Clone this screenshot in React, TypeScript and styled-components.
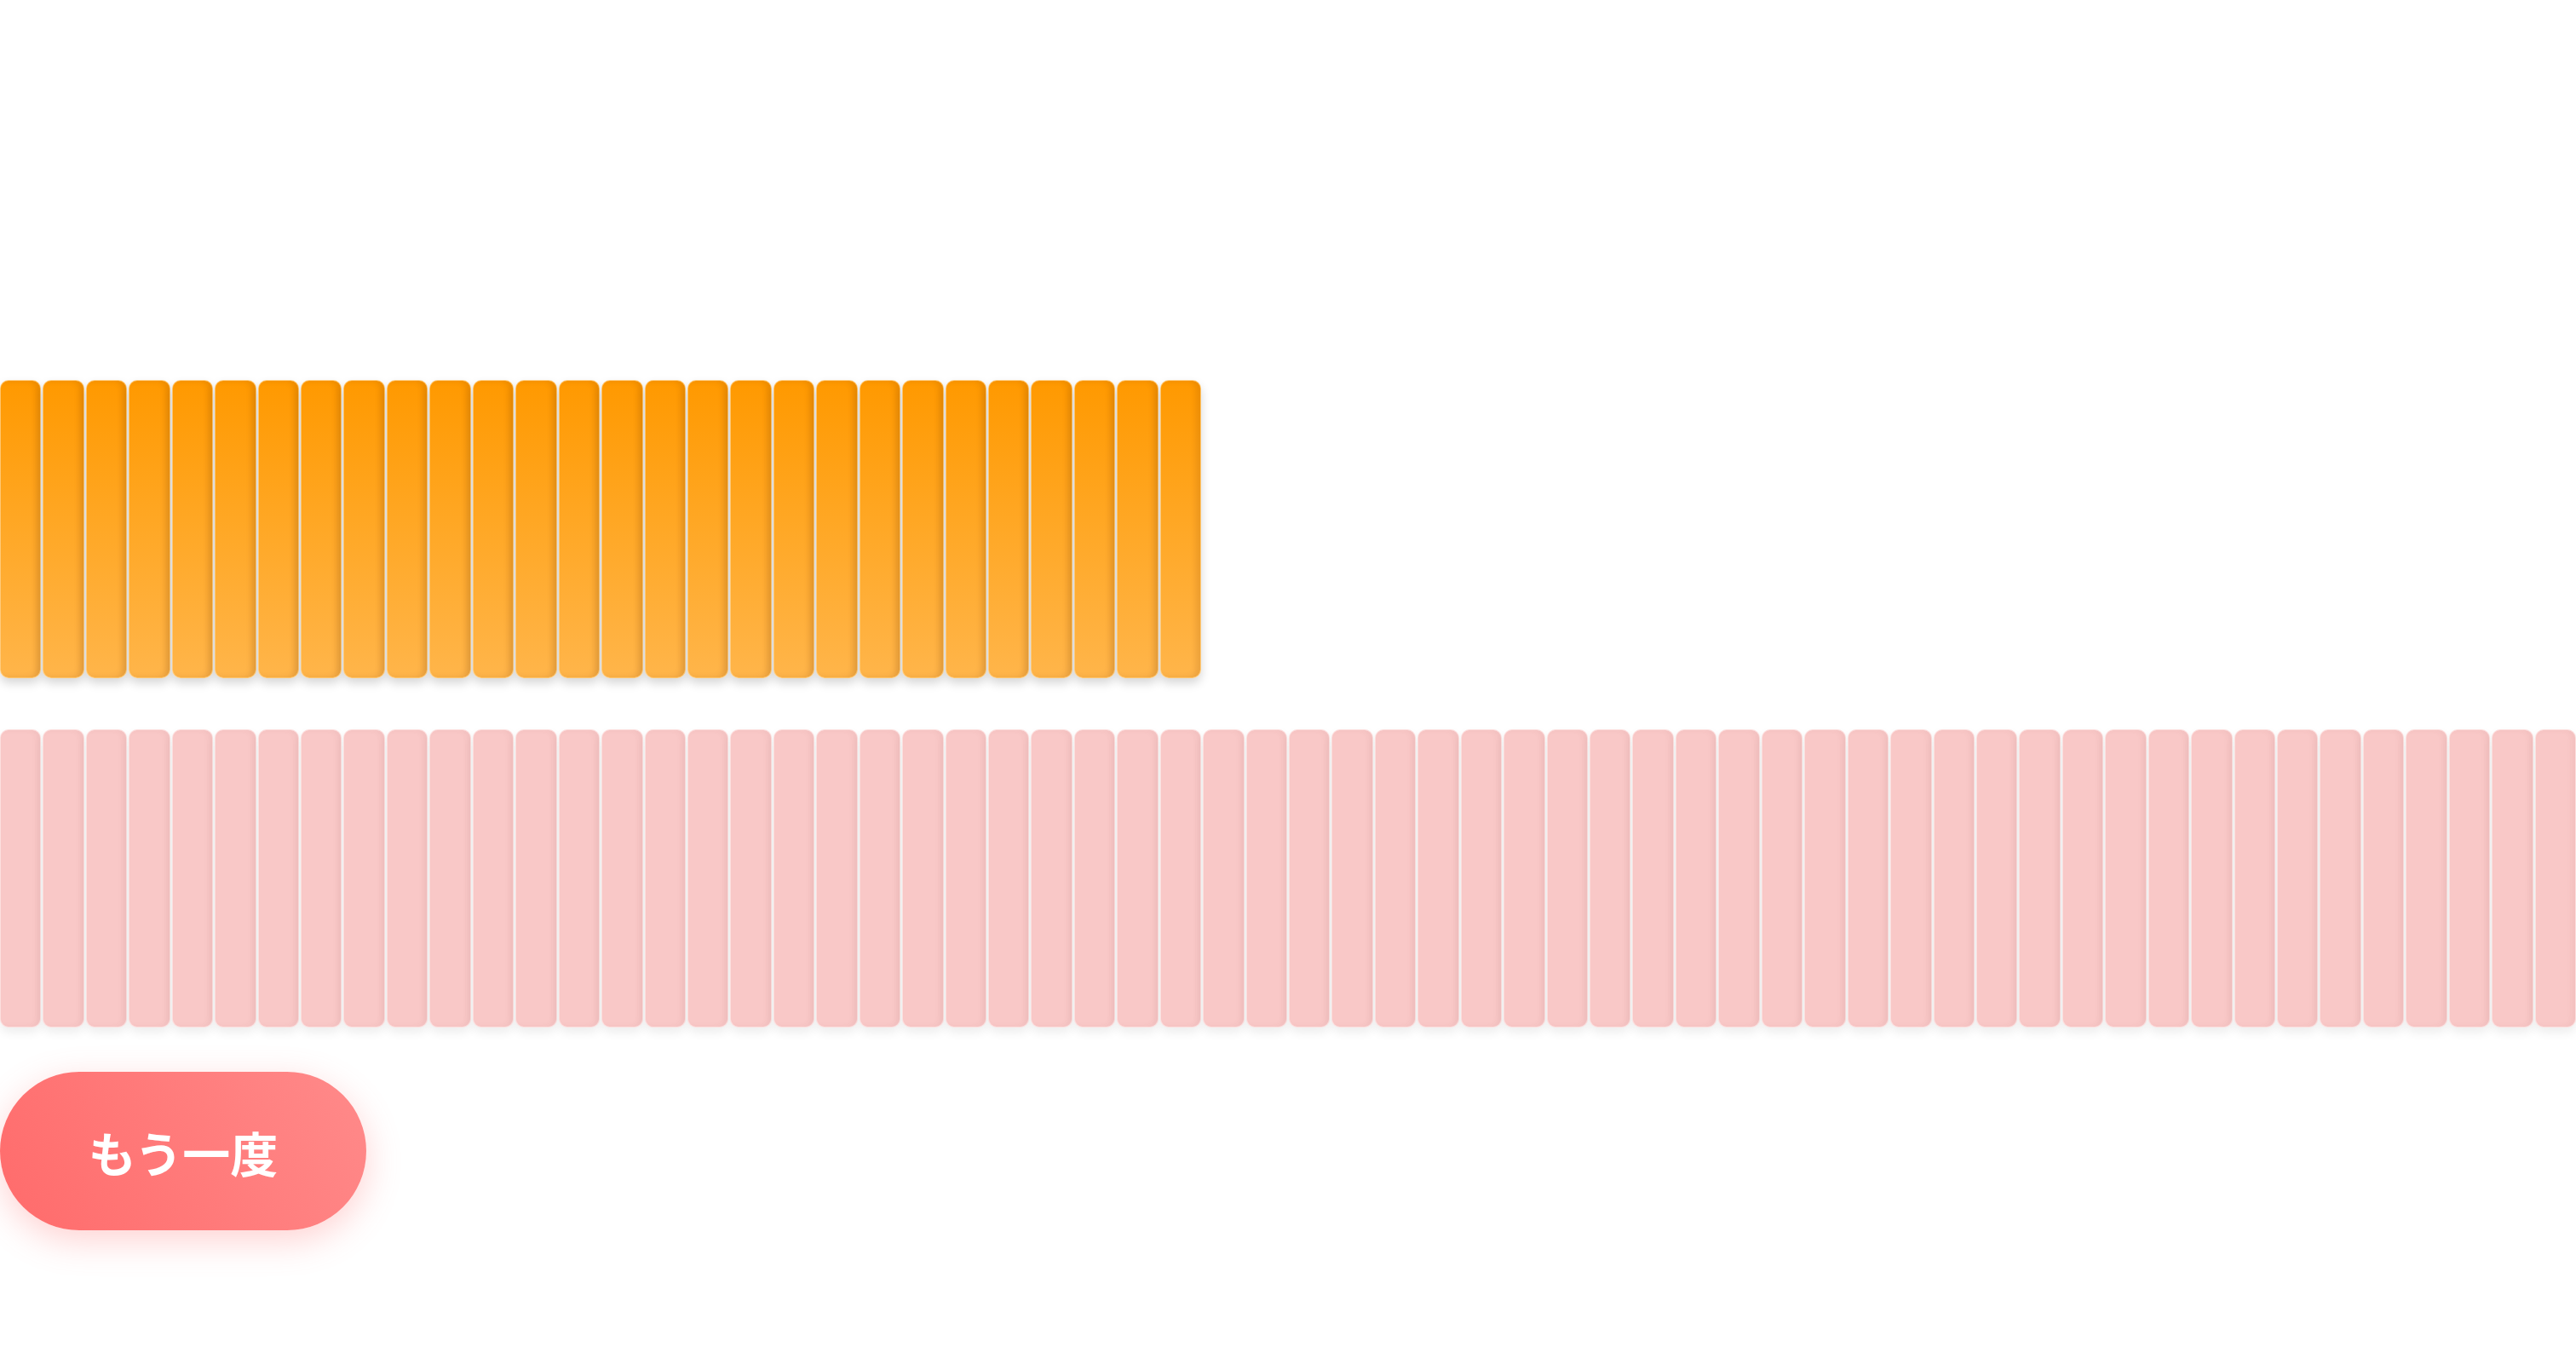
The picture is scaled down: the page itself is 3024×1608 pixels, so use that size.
import styled, { createGlobalStyle } from "styled-components";

const GlobalStyle = createGlobalStyle`
  html, body {
    margin: 0;
    padding: 0;
    background: #ffffff;
  }
  body {
    font-family: "Noto Sans CJK JP", "Noto Sans", sans-serif;
  }
`;

const FILLED = 28;
const TOTAL = 60;

const App = () => {
  return (
    <>
      <GlobalStyle />
      <Page>
        <Track>
          {Array.from({ length: FILLED }).map((_, i) => (
            <Bar key={i} $filled />
          ))}
        </Track>
        <Track>
          {Array.from({ length: TOTAL }).map((_, i) => (
            <Bar key={i} />
          ))}
        </Track>
        <RetryButton>もう一度</RetryButton>
      </Page>
    </>
  );
};

const Page = styled.div`
  display: flex;
  flex-direction: column;
  align-items: flex-start;
  padding-top: 446px;
  min-height: 1608px;
  box-sizing: border-box;
`;

const Track = styled.div`
  display: grid;
  grid-template-columns: repeat(${TOTAL}, 1fr);
  column-gap: 2px;
  width: 100%;
  margin-bottom: 60px;

  &:last-of-type {
    margin-bottom: 52px;
  }
`;

const Bar = styled.div<{ $filled?: boolean }>`
  height: 350px;
  box-sizing: border-box;
  border-radius: 10px;
  border: 1px solid
    ${(p) => (p.$filled ? "rgba(255, 214, 150, 0.7)" : "rgba(255, 232, 232, 0.7)")};
  background: ${(p) =>
    p.$filled
      ? "linear-gradient(180deg, #ff9900 0%, #ffa826 50%, #ffb54a 100%)"
      : "#f9c8c7"};
  box-shadow: ${(p) =>
    p.$filled
      ? "inset -5px 0 6px rgba(120, 60, 0, 0.14), 0 6px 12px rgba(0, 0, 0, 0.16)"
      : "inset -4px 0 6px rgba(120, 60, 60, 0.05), 0 6px 12px rgba(0, 0, 0, 0.07)"};
`;

const RetryButton = styled.button`
  width: 430px;
  height: 186px;
  padding: 0;
  border: none;
  border-radius: 93px;
  background: linear-gradient(60deg, #ff6b6b 0%, #ff8a8a 100%);
  box-shadow: 0 12px 40px rgba(255, 107, 107, 0.3);
  color: #ffffff;
  font-family: "Noto Sans CJK JP", "Noto Sans", sans-serif;
  font-size: 56px;
  font-weight: 700;
  letter-spacing: 0;
  cursor: pointer;
`;

export default App;
